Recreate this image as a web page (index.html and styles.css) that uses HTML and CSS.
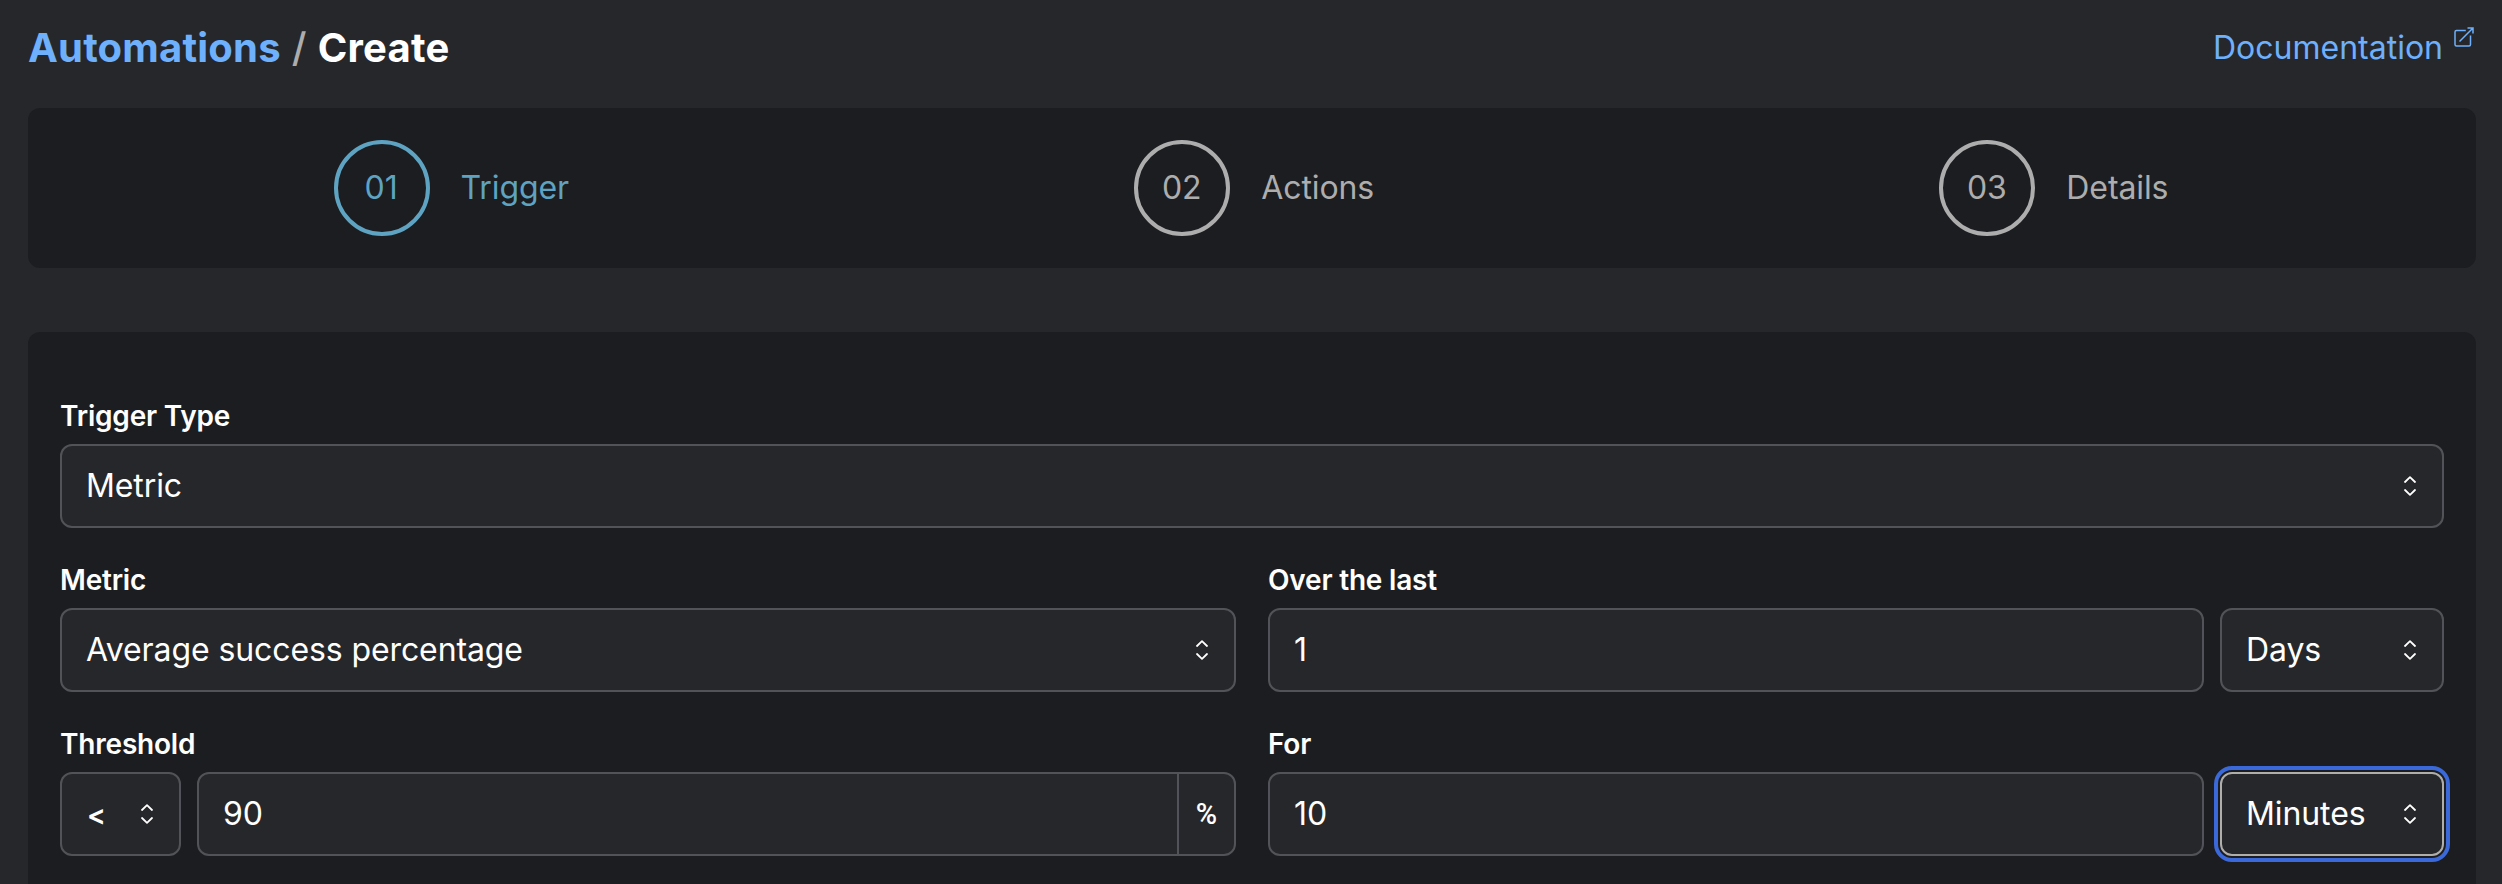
FILE: index.html
```html
<!DOCTYPE html>
<html lang="en">
<head>
<meta charset="utf-8">
<title>Automations / Create</title>
<link rel="stylesheet" href="styles.css">
</head>
<body>
<svg width="0" height="0" class="sprite" aria-hidden="true">
  <symbol id="chevrons" viewBox="0 0 12 20">
    <path d="M1 6 6 1.2 11 6M1 14l5 4.8 5-4.8" fill="none" stroke="currentColor" stroke-width="1.8" stroke-linecap="round" stroke-linejoin="round"/>
  </symbol>
</svg>
<header class="topbar">
  <h1 class="crumbs"><a class="crumb-link">Automations</a><span class="slash">/</span><span>Create</span></h1>
  <a class="docs">Documentation
    <svg class="external" viewBox="0 0 20 20"><path d="M11.8 3.5H2.5A1.5 1.5 0 0 0 1 5v12.5A1.5 1.5 0 0 0 2.5 19H15a1.5 1.5 0 0 0 1.5-1.5V8.5M5.500 14.500 19 1M13.500 1H19v5.500" fill="none" stroke="currentColor" stroke-width="1.5"/></svg>
  </a>
</header>
<main>
  <nav class="card steps">
    <div class="step active"><span class="num">01</span><span>Trigger</span></div>
    <div class="step"><span class="num">02</span><span>Actions</span></div>
    <div class="step"><span class="num">03</span><span>Details</span></div>
  </nav>
  <form class="card form">
    <div class="field wide">
      <label class="label">Trigger Type</label>
      <div class="row"><div class="control grow">Metric<svg class="chevrons"><use href="#chevrons"/></svg></div></div>
    </div>
    <div class="field">
      <label class="label">Metric</label>
      <div class="row"><div class="control grow">Average success percentage<svg class="chevrons"><use href="#chevrons"/></svg></div></div>
    </div>
    <div class="field">
      <label class="label">Over the last</label>
      <div class="row">
        <div class="control grow">1</div>
        <div class="control unit">Days<svg class="chevrons"><use href="#chevrons"/></svg></div>
      </div>
    </div>
    <div class="field">
      <label class="label">Threshold</label>
      <div class="row">
        <div class="control operator"><span class="op">&lt;</span><svg class="chevrons"><use href="#chevrons"/></svg></div>
        <div class="control grow joined"><span>90</span><span class="addon">%</span></div>
      </div>
    </div>
    <div class="field">
      <label class="label">For</label>
      <div class="row">
        <div class="control grow">10</div>
        <div class="control unit focused">Minutes<svg class="chevrons"><use href="#chevrons"/></svg></div>
      </div>
    </div>
  </form>
</main>
</body>
</html>
```

FILE: styles.css
```css
* { box-sizing: border-box; }
html { background: #26272b; }
body {
  margin: 0;
  padding: 0 26px 0 28px;
  background: #26272b;
  color: #fff;
  font: 430 32px/48px Inter, "Liberation Sans", sans-serif;
  font-optical-sizing: none;
  letter-spacing: -0.1px;
}
.sprite { position: absolute; }
.topbar {
  display: flex;
  align-items: center;
  justify-content: space-between;
  height: 108px;
  padding-bottom: 12px;
}
.crumbs { display: flex; gap: 11px; margin: 0; font-size: 40px; font-weight: 750; letter-spacing: 0.2px; }
.crumb-link { color: #6eb0fc; }
.slash { color: #adadad; font-weight: 450; }
.docs { display: flex; gap: 11px; color: #6eb0fc; letter-spacing: 0; }
.external { width: 20px; height: 20px; margin: 3px 2px 0 0; }
.card { background: #1c1d20; border-radius: 12px; }
.steps {
  display: flex;
  align-items: center;
  justify-content: space-around;
  height: 160px;
  padding: 0 24px;
  margin-bottom: 64px;
}
.step { display: flex; align-items: center; gap: 31px; padding-right: 2px; color: #adadae; }
.step.active { color: #5ea3c2; }
.num {
  display: flex;
  align-items: center;
  justify-content: center;
  width: 96px;
  height: 96px;
  padding-right: 1px;
  border: 4px solid;
  border-radius: 50%;
}
.form {
  display: grid;
  grid-template-columns: 1fr 1fr;
  gap: 32px;
  height: 552px;
  align-content: start;
  padding: 64px 32px 28px;
  border-radius: 12px 12px 0 0;
}
.wide { grid-column: 1 / -1; }
.label { display: block; height: 48px; font-size: 28px; line-height: 40px; font-weight: 600; letter-spacing: -0.2px; }
.row { display: flex; gap: 16px; }
.control {
  display: flex;
  align-items: center;
  justify-content: space-between;
  height: 84px;
  padding: 0 26px 0 24px;
  border: 2px solid #525358;
  border-radius: 12px;
  background: #26272b;
}
.grow { flex: 1; }
.unit { width: 224px; }
.operator { width: 121px; }
.op { padding: 1px 0 0 1px; font-size: 28px; font-weight: 600; }
.joined { padding-right: 0; }
.addon {
  display: flex;
  align-items: center;
  justify-content: center;
  align-self: stretch;
  width: 57px;
  border-left: 2px solid #525358;
  font-family: Roboto, sans-serif;
  font-size: 29px;
  font-weight: 500;
}
.chevrons { width: 12px; height: 20px; }
.focused { border-color: #b0aeab; outline: 4px solid #3b69d9; outline-offset: 2px; }
```
